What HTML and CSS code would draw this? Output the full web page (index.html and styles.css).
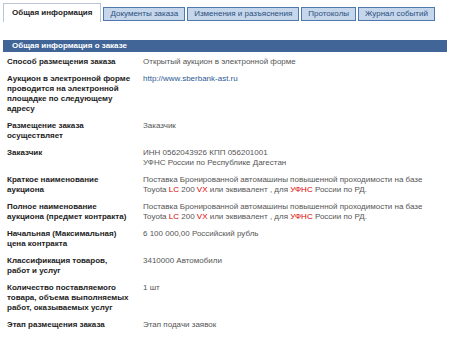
FILE: index.html
```html
<!DOCTYPE html>
<html lang="ru">
<head>
  <meta charset="UTF-8" />
  <title>Общая информация</title>
  <link rel="stylesheet" href="styles.css">
</head>
<body>

<div class="tabs">
  <div class="tab active">Общая информация</div>
  <div class="tab">Документы заказа</div>
  <div class="tab">Изменения и разъяснения</div>
  <div class="tab">Протоколы</div>
  <div class="tab">Журнал событий</div>
</div>

<div class="section-title">Общая информация о заказе</div>

<table class="info">
  <tr>
    <th>Способ размещения заказа</th>
    <td>Открытый аукцион в электронной форме</td>
  </tr>
  <tr>
    <th>Аукцион в электронной форме проводится на электронной площадке по следующему адресу</th>
    <td><span class="link">http://www.sberbank-ast.ru</span></td>
  </tr>
  <tr>
    <th>Размещение заказа осуществляет</th>
    <td>Заказчик</td>
  </tr>
  <tr>
    <th>Заказчик</th>
    <td class="link">ИНН 0562043926 КПП 056201001<br>УФНС России по Республике Дагестан</td>
  </tr>
  <tr>
    <th>Краткое наименование аукциона</th>
    <td>Поставка Бронированной автомашины повышенной проходимости на базе Toyota <span class="red">LC</span> 200 <span class="red">VX</span> или эквивалент , для <span class="red">УФНС</span> России по РД.</td>
  </tr>
  <tr>
    <th>Полное наименование аукциона (предмет контракта)</th>
    <td>Поставка Бронированной автомашины повышенной проходимости на базе Toyota <span class="red">LC</span> 200 <span class="red">VX</span> или эквивалент , для <span class="red">УФНС</span> России по РД.</td>
  </tr>
  <tr>
    <th>Начальная (Максимальная) цена контракта</th>
    <td>6 100 000,00 Российский рубль</td>
  </tr>
  <tr>
    <th>Классификация товаров,<br>работ и услуг</th>
    <td>3410000 Автомобили</td>
  </tr>
  <tr>
    <th>Количество поставляемого товара, объема выполняемых работ, оказываемых услуг</th>
    <td>1 шт</td>
  </tr>
  <tr>
    <th>Этап размещения заказа</th>
    <td>Этап подачи заявок</td>
  </tr>
</table>

</body>
</html>
```

FILE: styles.css
```css
body {
  margin: 0;
  padding: 3px 3px 0 3px;
  background: #fff;
  font-family: "Liberation Sans", Arial, sans-serif;
  font-size: 8px;
  color: #222;
}

.tabs {
  display: flex;
  align-items: flex-end;
  gap: 2px;
  height: 19px;
}

.tab {
  white-space: nowrap;
  background: #c6d7ec;
  border: 1px solid #4f79ad;
  color: #2c4f7c;
  padding: 0 6px;
  height: 12px;
  line-height: 12px;
  margin-bottom: 1px;
}

.tab.active {
  background: #fff;
  border-color: #b8c6d8;
  border-bottom: none;
  color: #222;
  font-weight: bold;
  height: 18px;
  line-height: 18px;
  margin-bottom: 0;
  padding: 0 8px;
}

.section-title {
  margin-top: 18px;
  background: #406596;
  color: #fff;
  font-weight: bold;
  height: 12px;
  line-height: 12px;
  padding-left: 9px;
}

.info {
  border-collapse: collapse;
  width: 100%;
  margin-top: 1px;
}

.info th,
.info td {
  vertical-align: top;
  text-align: left;
  line-height: 10px;
  padding: 3.5px 4px;
}

.info th {
  width: 126px;
  padding-right: 7px;
  font-weight: bold;
  color: #222;
}

.info td {
  color: #555;
  padding-left: 3px;
}

.link {
  color: #2d5a94;
}

.red {
  color: #d00;
}
```
